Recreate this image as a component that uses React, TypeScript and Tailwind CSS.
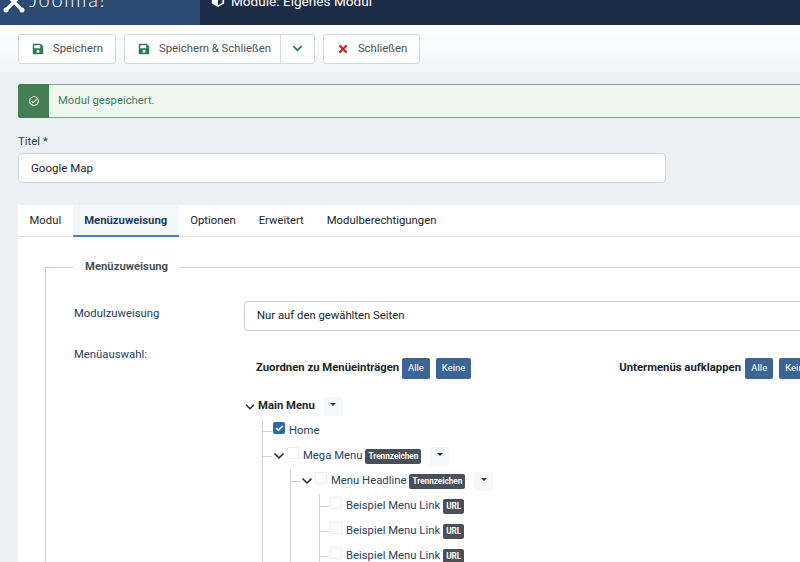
import { Check, ChevronDown } from 'lucide-react';
import { FaChevronDown, FaRegCheckCircle, FaSave, FaTimes } from 'react-icons/fa';
import type { ReactNode } from 'react';

function ToolbarButton({ icon, label }: { icon: ReactNode; label: string }) {
  return (
    <button className="h-[30px] flex items-center gap-[9px] pl-[13px] pr-[12px] text-[#495057] bg-white border border-[#d3d9e0] rounded-[3px]">
      {icon}
      <span className="pt-[2px]">{label}</span>
    </button>
  );
}

function SaveIcon() {
  return <FaSave className="w-[12px] h-[12px] text-[#2f7d4f]" />;
}

function Caret() {
  return (
    <span className="w-[19px] h-[19px] flex justify-center pt-[6px] bg-[#f6f7f9] rounded-[2px] ml-[9px]">
      <span className="w-0 h-0 border-x-[3px] border-x-transparent border-t-[3px] border-t-[#333]" />
    </span>
  );
}

function Badge({ children }: { children: ReactNode }) {
  return (
    <span className="ml-[3px] px-[3px] h-[15px] flex items-center text-[8.2px] font-bold text-white bg-[#495057] rounded-[2px]">
      {children}
    </span>
  );
}

function Tick() {
  return <span className="w-[9px] h-px bg-[#ced4da] shrink-0" />;
}

function Box() {
  return <span className="block w-[12px] h-[12px] border border-[#eceef1] rounded-[2px] bg-white shrink-0 -mt-[7px]" />;
}

function Toggle() {
  return (
    <span className="w-[13px] mr-[2px] flex justify-center shrink-0">
      <ChevronDown className="w-[16px] h-[16px] -mx-[2px] -mt-[2px] text-[#2b2b2b] shrink-0" strokeWidth={2.5} />
    </span>
  );
}

function SmallButton({ children }: { children: ReactNode }) {
  return (
    <span className="h-[21px] px-[6px] flex items-center text-[9.5px] text-white bg-[#3c6595] rounded-[2px]">{children}</span>
  );
}

function LinkRow() {
  return (
    <li className="h-[25px] flex items-center">
      <Tick />
      <span className="ml-[1px]"><Box /></span>
      <span className="ml-[4px] text-[#2a3f5f]">Beispiel Menu Link</span>
      <Badge>URL</Badge>
    </li>
  );
}

export default function App() {
  return (
    <div className="w-[800px] h-[562px] overflow-hidden bg-[#ebf0f5] text-[11.3px] font-['Roboto',sans-serif]">
      <header className="h-[25px] flex overflow-hidden bg-[#1c2c49]">
        <div className="w-[200px] h-[25px] bg-[#2b4a74] flex items-end pl-[3px] pb-[12px] gap-[4px] text-white">
          <svg className="w-[22px] h-[22px] shrink-0" viewBox="0 0 22 22" fill="#fff" stroke="#fff" strokeWidth="3.4" strokeLinecap="round">
            <path d="M5 5l12 12M17 5L5 17" fill="none" />
            <circle cx="3" cy="19" r="1.5" strokeWidth="2" />
            <circle cx="19" cy="19" r="1.5" strokeWidth="2" />
          </svg>
          <span className="text-[20px] font-light leading-[20px] tracking-[1.7px] mb-[4px] font-['Lato',sans-serif]">Joomla!</span>
        </div>
        <div className="flex items-end pl-[11px] pb-[15px] gap-[6px] text-white text-[13.6px] leading-[18px]">
          <svg className="w-[14px] h-[14px] mb-[3px]" viewBox="0 0 16 16" fill="#fff">
            <path d="M8 0l7 3v9l-7 4-7-4V3zM8 7v7l5-3V5z" />
          </svg>
          Module: Eigenes Modul
        </div>
      </header>

      <div className="h-[47px] flex items-center gap-[8px] pl-[18px] bg-gradient-to-b from-white to-[#f1f4f8]">
        <ToolbarButton icon={<SaveIcon />} label="Speichern" />
        <div className="h-[30px] flex text-[#495057] bg-white border border-[#d3d9e0] rounded-[3px]">
          <span className="flex items-center gap-[9px] pl-[13px] pr-[9px] border-r border-[#d3d9e0]">
            <SaveIcon />
            <span className="pt-[2px]">Speichern &amp; Schließen</span>
          </span>
          <span className="w-[33px] flex items-center justify-center">
            <FaChevronDown className="w-[11px] h-[11px] text-[#2f7d4f]" />
          </span>
        </div>
        <ToolbarButton icon={<FaTimes className="w-[12px] h-[12px] text-[#c52827]" />} label="Schließen" />
      </div>

      <div className="ml-[18px] mt-[12px] h-[34px] flex bg-[#eef6f1] border border-[#7ea78b] border-r-0 rounded-l-[3px] text-[#457d54]">
        <span className="w-[31px] -my-px -ml-px flex items-center justify-center bg-[#457d54] rounded-l-[3px]">
          <FaRegCheckCircle className="w-[10px] h-[10px] text-white" />
        </span>
        <span className="ml-[9px] flex items-center">Modul gespeichert.</span>
      </div>

      <div className="ml-[18px] mt-[16px]">
        <label className="block leading-[16px] text-[#22405f]">Titel *</label>
        <div className="mt-[3px] w-[648px] h-[30px] flex items-center px-[12px] pt-[2px] bg-white border border-[#cfd8e3] rounded-[4px] text-[#212529] text-[11.5px]">
          Google Map
        </div>
      </div>

      <main className="ml-[18px] mt-[22px] bg-white h-[357px] overflow-hidden">
        <nav className="h-[32px] flex border-b border-[#dfe3e7] text-[#212529]">
          <span className="px-[11.5px] pt-[2px] flex items-center">Modul</span>
          <span className="px-[11.5px] pt-[2px] flex items-center font-bold text-[#1c3d66] bg-[#f4f7fa] border-b-2 border-[#4f7cb8] h-[32px]">Menüzuweisung</span>
          <span className="px-[11.5px] pt-[2px] flex items-center">Optionen</span>
          <span className="px-[11.5px] pt-[2px] flex items-center">Erweitert</span>
          <span className="px-[11.5px] pt-[2px] flex items-center">Modulberechtigungen</span>
        </nav>

        <fieldset className="ml-[27px] mt-[22px] w-[800px] border border-[#c6ced8] pl-[28px] min-w-0">
          <legend className="-ml-px px-[12px] font-bold text-[#495057] leading-[16px]">Menüzuweisung</legend>

          <div className="mt-[26px] flex items-center">
            <label className="w-[170px] -mt-[4px] text-[#22405f]">Modulzuweisung</label>
            <div className="w-[600px] h-[30px] flex items-center px-[12px] border border-[#c6ced8] rounded-[4px] text-[#212529] shrink-0">
              Nur auf den gewählten Seiten
            </div>
          </div>

          <div className="mt-[16px] flex">
            <label className="w-[170px] leading-[16px] text-[#22405f]">Menüauswahl:</label>
            <div className="text-[#2a3f5f]">
              <div className="mt-[11px] flex items-center whitespace-nowrap">
                <strong className="ml-[12px] w-[146px] text-[#212529]">Zuordnen zu Menüeinträgen</strong>
                <span className="flex gap-[6px]">
                  <SmallButton>Alle</SmallButton>
                  <SmallButton>Keine</SmallButton>
                </span>
                <strong className="ml-[148px] w-[126px] text-[#212529] shrink-0">Untermenüs aufklappen</strong>
                <span className="flex gap-[6px]">
                  <SmallButton>Alle</SmallButton>
                  <SmallButton>Keine</SmallButton>
                </span>
              </div>

              <div className="mt-[15px] h-[25px] flex items-center">
                <ChevronDown className="w-[14px] h-[14px] -ml-[1px] text-[#2b2b2b]" strokeWidth={2.5} />
                <strong className="ml-px text-[#212529]">Main Menu</strong>
                <Caret />
              </div>

              <ul className="ml-[18px] border-l border-[#ced4da]">
                <li className="h-[25px] flex items-center">
                  <Tick />
                  <span className="ml-[1px] -mt-[7px] w-[12px] h-[12px] flex items-center justify-center rounded-[2px] bg-[#2a69b8]">
                    <Check className="w-[9px] h-[9px] text-white" strokeWidth={4} />
                  </span>
                  <span className="ml-[4px]">Home</span>
                </li>
                <li>
                  <div className="h-[25px] flex items-center">
                    <Tick />
                    <Toggle />
                    <Box />
                    <span className="ml-[4px]">Mega Menu</span>
                    <Badge>Trennzeichen</Badge>
                    <Caret />
                  </div>
                  <ul className="ml-[27px] border-l border-[#ced4da]">
                    <li>
                      <div className="h-[25px] flex items-center">
                        <Tick />
                        <Toggle />
                        <Box />
                        <span className="ml-[4px]">Menu Headline</span>
                        <Badge>Trennzeichen</Badge>
                        <Caret />
                      </div>
                      <ul className="ml-[28px] border-l border-[#ced4da]">
                        <LinkRow />
                        <LinkRow />
                        <LinkRow />
                      </ul>
                    </li>
                  </ul>
                </li>
              </ul>
            </div>
          </div>
        </fieldset>
      </main>
    </div>
  );
}
